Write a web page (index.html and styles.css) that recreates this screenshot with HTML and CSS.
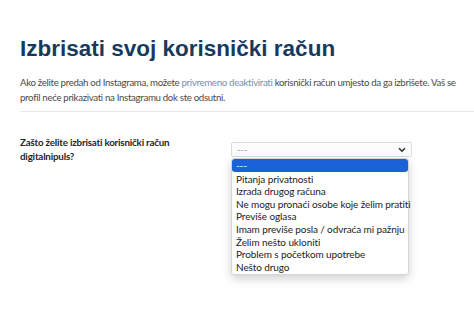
FILE: index.html
```html
<!DOCTYPE html>
<html lang="hr">
<head>
<meta charset="utf-8">
<link rel="stylesheet" href="styles.css">
</head>
<body>
<main class="page">
  <h1 class="title">Izbrisati svoj korisnički račun</h1>
  <p class="intro">Ako želite predah od Instagrama, možete <a class="link" href="#">privremeno deaktivirati</a> korisnički račun umjesto da ga izbrišete. Vaš se profil neće prikazivati na Instagramu dok ste odsutni.</p>
  <hr class="rule">
  <div class="form-row">
    <label class="question">Zašto želite izbrisati korisnički račun digitalnipuls?</label>
    <div class="select-wrap">
      <div class="select">
        <span class="select-value">---</span>
        <svg class="chev" width="8" height="6" viewBox="0 0 8 6"><path d="M1 1.2 L4 4.2 L7 1.2" fill="none" stroke="#333" stroke-width="1.6"/></svg>
      </div>
      <ul class="menu">
        <li class="opt active">---</li>
        <li class="opt">Pitanja privatnosti</li>
        <li class="opt">Izrada drugog računa</li>
        <li class="opt">Ne mogu pronaći osobe koje želim pratiti</li>
        <li class="opt">Previše oglasa</li>
        <li class="opt">Imam previše posla / odvraća mi pažnju</li>
        <li class="opt">Želim nešto ukloniti</li>
        <li class="opt">Problem s početkom upotrebe</li>
        <li class="opt">Nešto drugo</li>
      </ul>
    </div>
  </div>
</main>
</body>
</html>
```
FILE: styles.css
```css
* { box-sizing: border-box; }
html, body { margin: 0; padding: 0; background: #fff; }
body { width: 474px; height: 316px; overflow: hidden; font-family: Lato, "Open Sans", sans-serif; }
.page { padding: 36px 0 0 20px; }
.title {
  margin: 0;
  font-family: "Liberation Sans", Arial, sans-serif;
  font-weight: bold;
  font-size: 22.5px;
  line-height: 26px;
  color: #173a5c;
}
.intro {
  margin: 13px 0 0 0;
  width: 448px;
  font-size: 9.7px;
  letter-spacing: -0.33px;
  line-height: 15px;
  color: #4a4a4a;
}
.link { color: #6f8fb5; text-decoration: none; }
.rule { margin: 6px 0 0 0; border: 0; border-top: 1px solid #e9e9e9; }
.form-row {
  display: grid;
  grid-template-columns: 211px 180px;
  margin-top: 24px;
}
.question {
  font-size: 9.8px;
  letter-spacing: -0.2px;
  font-weight: 700;
  line-height: 13.5px;
  color: #262626;
  width: 170px;
}
.select-wrap { position: relative; margin-top: 6px; }
.select {
  display: flex;
  align-items: center;
  justify-content: space-between;
  height: 15px;
  width: 181px;
  padding: 0 5px 0 5px;
  border: 1px solid #dcdcdc;
  border-radius: 2px;
  background: #fcfcfc;
}
.select-value { font-size: 9px; color: #999; }
.menu {
  position: absolute;
  left: 0;
  top: 16px;
  width: 178px;
  margin: 0;
  padding: 0 0 1px 0;
  list-style: none;
  background: #fff;
  border: 1px solid #d6d6d6;
  border-radius: 3px;
  box-shadow: 0 4px 10px rgba(0,0,0,0.18);
}
.opt {
  font-size: 10px;
  letter-spacing: -0.1px;
  line-height: 12.6px;
  height: 12.6px;
  padding-left: 4px;
  color: #222;
  white-space: nowrap;
}
.opt.active {
  background: #1a62d6;
  color: #fff;
  border-radius: 3px;
  margin: 0 0 1px 0;
}
```
